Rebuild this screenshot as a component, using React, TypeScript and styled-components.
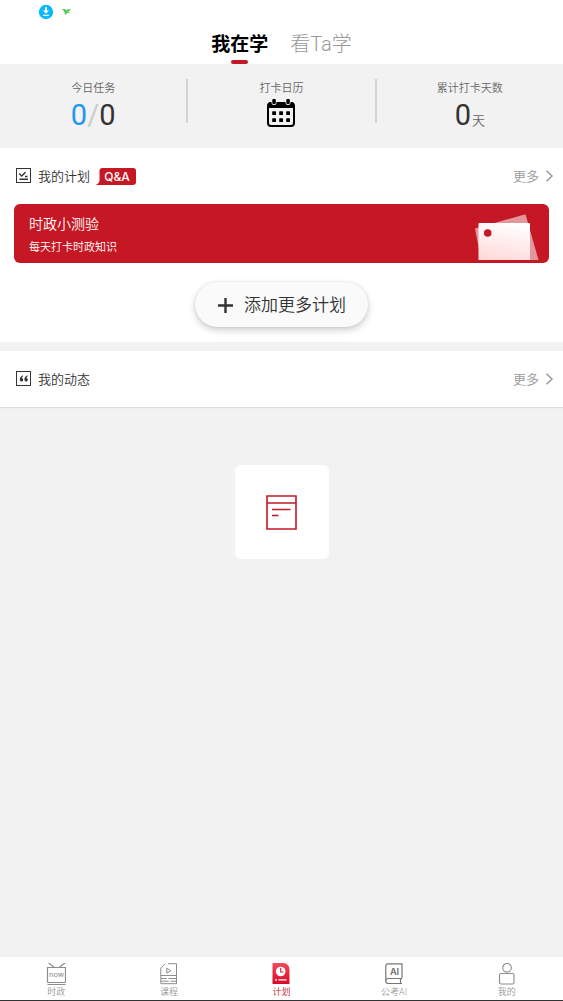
import React from "react";
import styled, { createGlobalStyle } from "styled-components";

const RED = "#c61724";

const GlobalStyle = createGlobalStyle`
  *, *::before, *::after { box-sizing: border-box; }
  body {
    margin: 0;
    background: #f2f2f2;
    font-family: Roboto, "Noto Sans CJK SC", sans-serif;
    font-weight: 350;
    color: #333;
  }
  button { font: inherit; color: inherit; border: 0; padding: 0; background: none; cursor: pointer; }
  a { color: inherit; text-decoration: none; }
  h2, p { margin: 0; font-weight: inherit; }
  svg { display: block; flex: none; }
`;

const Page = styled.div`
  display: flex;
  flex-direction: column;
  min-height: 100vh;
`;

const StatusBar = styled.div`
  display: flex;
  align-items: center;
  gap: 8px;
  height: 24px;
  padding-left: 38px;
  background: #fff;
`;

const TopTabs = styled.nav`
  display: flex;
  justify-content: center;
  gap: 22px;
  height: 40px;
  background: #fff;
`;

const TopTab = styled.button<{ $active?: boolean }>`
  display: flex;
  flex-direction: column;
  align-items: center;
  justify-content: space-between;
  font-size: ${(p) => (p.$active ? 19 : 20)}px;
  line-height: ${(p) => (p.$active ? 42 : 40)}px;
  font-weight: ${(p) => (p.$active ? 700 : 300)};
  color: ${(p) => (p.$active ? "#000" : "#999")};
`;

const TabLabel = styled.span`
  height: 36px;
`;

const TabMark = styled.span`
  width: 17px;
  height: 4px;
  border-radius: 2px;
  background: ${RED};
`;

const Stats = styled.section`
  display: grid;
  grid-template-columns: 1fr 2px 1fr 2px 1fr;
  height: 84px;
  padding-top: 15px;
`;

const Divider = styled.span`
  height: 44px;
  background: #d3d3d3;
`;

const Stat = styled.div`
  display: flex;
  flex-direction: column;
  align-items: center;
`;

const StatLabel = styled.span`
  font-size: 11px;
  line-height: 20px;
  color: #666;
`;

const StatValue = styled.div`
  display: flex;
  align-items: baseline;
  font-size: 29px;
  font-weight: 400;
  line-height: 33px;
`;

const Done = styled.span`
  color: #2196f3;
`;

const Slash = styled.span`
  color: #ccc;
`;

const Unit = styled.span`
  margin-left: 1px;
  font-size: 13px;
  font-weight: 350;
  line-height: 18px;
  color: #666;
`;

const CalendarButton = styled.button`
  height: 28px;
`;

const Panel = styled.section<{ $raised?: boolean }>`
  background: #fff;
  margin-bottom: 9px;
  box-shadow: ${(p) => (p.$raised ? "0 1px 1px #dedede" : "none")};
`;

const PanelHead = styled.header`
  display: flex;
  align-items: center;
  height: 56px;
  padding: 0 8px 0 16px;
`;

const PanelTitle = styled.h2`
  margin: 0 6px;
  padding-top: 2px;
  font-size: 13px;
  line-height: 20px;
`;

const Bubble = styled.span`
  position: relative;
  width: 40px;
  height: 17px;
  svg { position: absolute; inset: 0; }
`;

const BubbleText = styled.span`
  position: relative;
  display: block;
  padding-left: 2px;
  text-align: center;
  font-family: Inter, sans-serif;
  font-weight: 500;
  font-size: 12px;
  line-height: 17px;
  color: #fff;
`;

const More = styled.a`
  display: flex;
  align-items: center;
  gap: 4px;
  margin-left: auto;
  font-size: 13px;
  line-height: 20px;
  color: #999;
`;

const MoreLabel = styled.span`
  padding-top: 2px;
`;

const PlanCard = styled.a`
  display: flex;
  justify-content: space-between;
  height: 59px;
  margin: 0 14px;
  padding: 9px 10px 0 15px;
  border-radius: 6px;
  background: ${RED};
  color: #fff;
`;

const PlanName = styled.p`
  font-size: 14px;
  line-height: 22px;
`;

const PlanNote = styled.p`
  font-size: 11px;
  line-height: 26px;
`;

const AddRow = styled.div`
  display: flex;
  justify-content: center;
  padding: 19px 0 15px;
`;

const AddButton = styled.button`
  display: flex;
  align-items: center;
  gap: 11px;
  height: 45px;
  padding: 0 22px 0 23px;
  border-radius: 23px;
  background: #fafafa;
  box-shadow: 0 3px 7px rgba(0, 0, 0, 0.2), 0 0 3px rgba(0, 0, 0, 0.08);
  font-size: 17px;
  line-height: 24px;
`;

const Empty = styled.main`
  flex: 1;
  display: flex;
  justify-content: center;
  align-items: flex-start;
  padding-top: 49px;
`;

const EmptyTile = styled.div`
  display: grid;
  place-items: center;
  width: 94px;
  height: 94px;
  border-radius: 6px;
  background: #fff;
`;

const BottomNav = styled.nav`
  position: sticky;
  bottom: 0;
  display: grid;
  grid-template-columns: repeat(5, 1fr);
  height: 44px;
  padding-top: 6px;
  background: #fff;
  border-bottom: 1px solid #333;
`;

const NavItem = styled.a<{ $active?: boolean }>`
  display: flex;
  flex-direction: column;
  align-items: center;
  gap: 1px;
  font-size: 9px;
  line-height: 12px;
  color: ${(p) => (p.$active ? RED : "#999")};
`;

const DownloadIcon = () => (
  <svg width="16" height="16" viewBox="0 0 16 16">
    <circle cx="8" cy="8" r="7.2" fill="#08b9fb" />
    <path d="M8 3.2v4" stroke="#fff" strokeWidth="2" />
    <path d="M5 6.500h6L8 9.800zM5.200 10.800h5.600V12H5.200z" fill="#fff" />
  </svg>
);

const BirdIcon = () => (
  <svg width="9" height="6" viewBox="0 0 9 6">
    <path d="M0 0h2.800l1.400 1.200L5.500.3H9L7.600 1.800 5.800 2.200l-.4.500h2.600L6.800 3.900H5L3.800 5.800 2.400 5 3 3.600 1.600 2.700 1.800 1.800z" fill="#55c45e" />
  </svg>
);

const CalendarIcon = () => (
  <svg width="28" height="28" viewBox="0 0 28 28">
    <rect x="1" y="4" width="26" height="23" rx="3" fill="none" stroke="#000" strokeWidth="2" />
    <path d="M1 9V6q0-3 3-3h20q3 0 3 3v3z" />
    <rect x="4.500" y="-1" width="5" height="7" rx="2.500" fill="#f2f2f2" />
    <rect x="18.500" y="-1" width="5" height="7" rx="2.500" fill="#f2f2f2" />
    <rect x="5.300" y="0" width="3.500" height="5" rx="1" />
    <rect x="19.300" y="0" width="3.500" height="5" rx="1" />
    {[5.200, 12.200, 19.200].map((x) => (
      <React.Fragment key={x}>
        <rect x={x} y="12.200" width="3.800" height="3.800" rx=".6" />
        <rect x={x} y="19.200" width="3.800" height="3.800" rx=".6" />
      </React.Fragment>
    ))}
  </svg>
);

const ChecklistIcon = () => (
  <svg width="16" height="16" viewBox="0 0 16 16" fill="none" stroke="#333">
    <rect x=".5" y=".5" width="14" height="14" />
    <path d="M3.300 5.500l2.400 2.600L9.500 4.300M9 8.500h2.500M3.500 11.300h8.500" strokeWidth="1.400" />
  </svg>
);

const QuoteIcon = () => (
  <svg width="16" height="16" viewBox="0 0 16 16" fill="#333">
    <rect x=".5" y=".5" width="14" height="14" fill="none" stroke="#333" />
    <path d="M7 4.300C4.800 5 3.800 6.800 3.800 8.800a1.700 1.700 0 1 0 1.900-1.700Q5.700 6 7 5.200zM11.600 4.300C9.400 5 8.400 6.800 8.400 8.800a1.700 1.700 0 1 0 1.900-1.700q0-1.100 1.300-1.900z" />
  </svg>
);

const Chevron = () => (
  <svg width="12" height="12" viewBox="0 0 12 12" fill="none" stroke="#999" strokeWidth="1.500">
    <path d="M3.500 .7L9 6 3.500 11.300" />
  </svg>
);

const BubbleShape = () => (
  <svg width="40" height="17" viewBox="0 0 40 17" fill={RED}>
    <path d="M6.500 0H37q3 0 3 3v11q0 3-3 3H0q3.500-2 3.500-4V3q0-3 3-3z" />
  </svg>
);

const CardsArt = () => (
  <svg width="64" height="48" viewBox="0 0 64 48">
    <defs>
      <linearGradient id="sheet" x1=".6" y1="0" x2=".35" y2="1">
        <stop offset="0" stopColor="#fff" />
        <stop offset="1" stopColor="#ffdada" />
      </linearGradient>
    </defs>
    <path d="M0 15.500L49.500 1.500q1-.3 1.300.7L63.500 47H6z" fill="#fff" opacity=".55" />
    <path d="M3.500 11q0-1 1-1H54q1 0 1 1V47H3.500z" fill="url(#sheet)" />
    <circle cx="12.700" cy="20" r="3.800" fill={RED} />
  </svg>
);

const PlusIcon = () => (
  <svg width="15" height="17" viewBox="0 0 15 17" stroke="#333" strokeWidth="2.400">
    <path d="M7.500 2v15M0 9.500h15" />
  </svg>
);

const DocumentIcon = () => (
  <svg width="31" height="35" viewBox="0 0 31 35" fill="none" stroke={RED} strokeWidth="1.600">
    <path d="M1 1h29v33H1zM1 8h29M6 14.500h18.500M6 20.500h6.500" />
  </svg>
);

const NewsIcon = () => (
  <svg width="20" height="22" viewBox="0 0 20 22" fill="none" stroke="#8c8c8c">
    <path d="M2.500 0L8 4M19 0l-5.500 4M1.500 19.500v-15h18v15" strokeWidth="1.200" />
    <path d="M1.500 19.500h18M1.500 21.500h18" />
    <text x="10.600" y="14" textAnchor="middle" fontSize="8" fontFamily="Roboto" fontWeight="400" fill="#8c8c8c" stroke="none">now</text>
  </svg>
);

const CourseIcon = () => (
  <svg width="18" height="22" viewBox="0 0 18 22" fill="none" stroke="#8c8c8c">
    <path d="M8 .7h8.500v20H.8V5L5 .8M.8 12.500h15.700M.8 15.500h6M8.500 15.500h8M.8 18.200h8M10.500 18.200h6M6.800 5.200v5l4-2.500z" />
  </svg>
);

const PlanIcon = () => (
  <svg width="18" height="22" viewBox="0 0 18 22">
    <defs>
      <linearGradient id="plan" x1="0" y1="0" x2="0" y2="1">
        <stop offset="0" stopColor="#f04a5c" />
        <stop offset="1" stopColor="#d80a28" />
      </linearGradient>
    </defs>
    <path d="M.5 0H12q5.500 1 5.500 7v14H.5z" fill="url(#plan)" />
    <circle cx="8.700" cy="8.500" r="4.800" fill="#fff" />
    <path d="M8.700 5v4h2.800" fill="none" stroke="#df2740" strokeWidth="1.200" />
    <path d="M3 16.800h2M6.500 16.800h8" stroke="#fff" strokeWidth="1.200" />
  </svg>
);

const AiBookIcon = () => (
  <svg width="18" height="22" viewBox="0 0 18 22" fill="none" stroke="#777" strokeWidth="1.200">
    <path d="M17 15.500V.8H3Q.8.800.8 3v15M17 15.500H3.500Q.8 15.500.8 18t2.700 2.500H17M15.500 15.500v5" />
    <text x="9.500" y="11.500" textAnchor="middle" fontSize="9" fontWeight="700" fontFamily="Inter" fill="#777" stroke="none">AI</text>
  </svg>
);

const PersonIcon = () => (
  <svg width="18" height="22" viewBox="0 0 18 22" fill="none" stroke="#8c8c8c" strokeWidth="1.100">
    <circle cx="9" cy="4.800" r="4.300" />
    <rect x="1.500" y="10.500" width="14.500" height="10.500" rx="1.500" />
  </svg>
);

const navItems = [
  { label: "时政", Icon: NewsIcon },
  { label: "课程", Icon: CourseIcon },
  { label: "计划", Icon: PlanIcon, active: true },
  { label: "公考AI", Icon: AiBookIcon },
  { label: "我的", Icon: PersonIcon },
];

const MoreLink = ({ href }: { href: string }) => (
  <More href={href}>
    <MoreLabel>更多</MoreLabel>
    <Chevron />
  </More>
);

export default function App() {
  return (
    <Page lang="zh-CN">
      <GlobalStyle />
      <StatusBar>
        <DownloadIcon />
        <BirdIcon />
      </StatusBar>
      <TopTabs>
        <TopTab $active>
          <TabLabel>我在学</TabLabel>
          <TabMark />
        </TopTab>
        <TopTab>
          <TabLabel>看Ta学</TabLabel>
        </TopTab>
      </TopTabs>

      <Stats>
        <Stat>
          <StatLabel>今日任务</StatLabel>
          <StatValue>
            <Done>0</Done>
            <Slash>/</Slash>
            <span>0</span>
          </StatValue>
        </Stat>
        <Divider />
        <Stat>
          <StatLabel>打卡日历</StatLabel>
          <CalendarButton aria-label="打卡日历">
            <CalendarIcon />
          </CalendarButton>
        </Stat>
        <Divider />
        <Stat>
          <StatLabel>累计打卡天数</StatLabel>
          <StatValue>
            <span>0</span>
            <Unit>天</Unit>
          </StatValue>
        </Stat>
      </Stats>

      <Panel>
        <PanelHead>
          <ChecklistIcon />
          <PanelTitle>我的计划</PanelTitle>
          <Bubble>
            <BubbleShape />
            <BubbleText>Q&amp;A</BubbleText>
          </Bubble>
          <MoreLink href="#plans" />
        </PanelHead>
        <PlanCard href="#quiz">
          <div>
            <PlanName>时政小测验</PlanName>
            <PlanNote>每天打卡时政知识</PlanNote>
          </div>
          <CardsArt />
        </PlanCard>
        <AddRow>
          <AddButton>
            <PlusIcon />
            添加更多计划
          </AddButton>
        </AddRow>
      </Panel>

      <Panel $raised>
        <PanelHead>
          <QuoteIcon />
          <PanelTitle>我的动态</PanelTitle>
          <MoreLink href="#feed" />
        </PanelHead>
      </Panel>

      <Empty>
        <EmptyTile>
          <DocumentIcon />
        </EmptyTile>
      </Empty>

      <BottomNav>
        {navItems.map(({ label, Icon, active }) => (
          <NavItem key={label} href={"#" + label} $active={active}>
            <Icon />
            {label}
          </NavItem>
        ))}
      </BottomNav>
    </Page>
  );
}
